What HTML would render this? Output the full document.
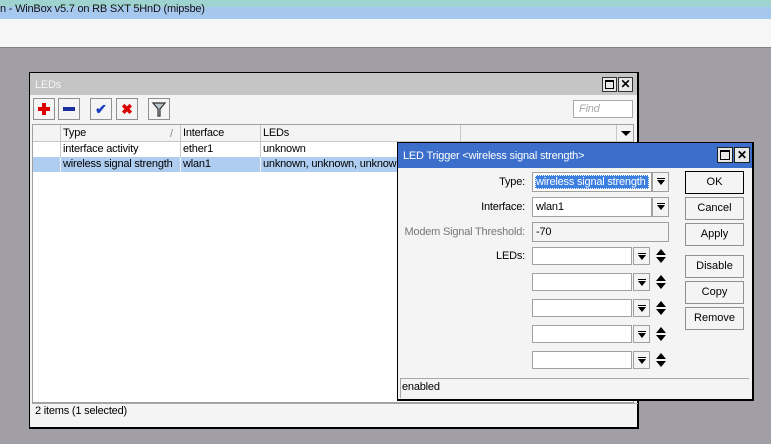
<!DOCTYPE html>
<html><head><meta charset="utf-8"><style>
*{margin:0;padding:0;box-sizing:border-box}
body{width:771px;height:444px;overflow:hidden;background:#a19fa5;font:11px "Liberation Sans",sans-serif;color:#000;position:relative}
.a{position:absolute}
.t{position:absolute;white-space:nowrap;line-height:13px;font-size:11px!important;letter-spacing:-0.2px}
.fld{position:absolute;background:#fff;border:1px solid #a0a0a0}
.dd{position:absolute;background:#f4f4f4;border:1px solid #a0a0a0;width:17px;height:20px}
.dd:after{content:"";position:absolute;left:4px;top:5px;width:8px;height:1px;background:#000}
.dd i{position:absolute;left:4px;top:7px;border-left:4px solid transparent;border-right:4px solid transparent;border-top:5px solid #000;width:0;height:0}
.btn{position:absolute;background:#f4f4f4;border:1px solid #909090;text-align:center;line-height:21px;font-size:11px}
.ud{position:absolute;width:10px;height:14px}
.ud:before{content:"";position:absolute;left:0;top:0;border-left:5px solid transparent;border-right:5px solid transparent;border-bottom:6px solid #000}
.ud:after{content:"";position:absolute;left:0;top:8px;border-left:5px solid transparent;border-right:5px solid transparent;border-top:6px solid #000}
.tb{position:absolute;top:98px;width:22px;height:22px;background:#f4f4f4;border:1px solid #909090}
</style></head><body>
<div class="a" style="left:0;top:0;width:771px;height:7px;background:#9ed3cf"></div>
<div class="a" style="left:0;top:7px;width:771px;height:12px;background:#a6c8ee"></div>
<div class="t" style="left:0;top:3px;color:#111">n - WinBox v5.7 on RB SXT 5HnD (mipsbe)</div>
<div class="a" style="left:0;top:19px;width:771px;height:29px;background:#f6f6f6;border-bottom:1px solid #808080"></div>

<div class="a" style="left:29px;top:72px;width:610px;height:357px;background:#f4f4f4;border:1px solid #000;border-right-width:2px;border-bottom-width:2px"></div>
<div class="a" style="left:30px;top:73px;width:607px;height:22px;background:#c5c5c5"></div>
<div class="t" style="left:35px;top:79px;color:#f4f4f4">LEDs</div>
<div class="a" style="left:602px;top:77px;width:15px;height:15px;border:1px solid #333;background:#e8e8e8"><div class="a" style="left:2px;top:2px;width:9px;height:9px;border:1px solid #000;border-top-width:2px"></div></div>
<div class="a" style="left:618px;top:77px;width:15px;height:15px;border:1px solid #333;background:#e8e8e8;font-weight:bold;font-size:12px;line-height:13px;text-align:center">✕</div>

<div class="tb" style="left:33px"><div class="a" style="left:4px;top:8px;width:12px;height:4px;background:#d00"></div><div class="a" style="left:8px;top:4px;width:4px;height:12px;background:#d00"></div></div>
<div class="tb" style="left:58px"><div class="a" style="left:4px;top:8px;width:12px;height:4px;background:#1a2fa0"></div></div>
<div class="tb" style="left:90px;color:#1a3ec0;font-size:14px;text-align:center;line-height:20px;font-weight:bold">✔</div>
<div class="tb" style="left:116px;color:#d00;font-size:14px;text-align:center;line-height:20px;font-weight:bold">✖</div>
<div class="tb" style="left:148px"><svg width="20" height="20" style="position:absolute;left:0;top:0"><path d="M4 4 H16 L11 10 V17 H9 V10 Z" fill="#b8c4cc" stroke="#333" stroke-width="1.2"/></svg></div>
<div class="a" style="left:573px;top:100px;width:60px;height:18px;background:#fff;border:1px solid #a8a8a8"></div>
<div class="t" style="left:579px;top:103px;color:#a8a8a8;font-style:italic">Find</div>

<div class="a" style="left:32px;top:124px;width:602px;height:279px;background:#fff;border:1px solid #a0a0a0"></div>
<div class="a" style="left:33px;top:125px;width:600px;height:17px;background:#f4f4f4;border-bottom:1px solid #c8c8c8"></div>
<div class="a" style="left:60px;top:125px;width:1px;height:47px;background:#c8c8c8"></div>
<div class="a" style="left:180px;top:125px;width:1px;height:47px;background:#c8c8c8"></div>
<div class="a" style="left:260px;top:125px;width:1px;height:47px;background:#c8c8c8"></div>
<div class="a" style="left:460px;top:125px;width:1px;height:17px;background:#c8c8c8"></div>
<div class="a" style="left:616px;top:125px;width:1px;height:17px;background:#c8c8c8"></div>
<div class="a" style="left:621px;top:131px;border-left:5px solid transparent;border-right:5px solid transparent;border-top:5px solid #000"></div>
<div class="t" style="left:63px;top:127px">Type</div>
<div class="t" style="left:170px;top:128px;color:#888;font-size:9px">/</div>
<div class="t" style="left:183px;top:127px">Interface</div>
<div class="t" style="left:263px;top:127px">LEDs</div>
<div class="a" style="left:33px;top:157px;width:600px;height:1px;background:#e4e4e4"></div>
<div class="t" style="left:63px;top:143px">interface activity</div>
<div class="t" style="left:183px;top:143px">ether1</div>
<div class="t" style="left:263px;top:143px">unknown</div>
<div class="a" style="left:33px;top:157px;width:600px;height:15px;background:#afcdf0"></div>
<div class="a" style="left:60px;top:157px;width:1px;height:15px;background:#f0f0f0"></div>
<div class="a" style="left:180px;top:157px;width:1px;height:15px;background:#f0f0f0"></div>
<div class="a" style="left:260px;top:157px;width:1px;height:15px;background:#f0f0f0"></div>
<div class="t" style="left:63px;top:158px">wireless signal strength</div>
<div class="t" style="left:183px;top:158px">wlan1</div>
<div class="t" style="left:263px;top:158px">unknown, unknown, unknown</div>
<div class="a" style="left:32px;top:403px;width:606px;height:1px;background:#a8a8a8"></div>
<div class="t" style="left:35px;top:405px">2 items (1 selected)</div>

<div class="a" style="left:397px;top:142px;width:357px;height:259px;background:#f4f4f4;border:1px solid #000;border-right-width:2px;border-bottom-width:2px"></div>
<div class="a" style="left:398px;top:143px;width:354px;height:25px;background:#3b6fcb"></div>
<div class="t" style="left:403px;top:150px;color:#fff">LED Trigger &lt;wireless signal strength&gt;</div>
<div class="a" style="left:717px;top:147px;width:16px;height:16px;border:1px solid #222;background:#e8e8e8"><div class="a" style="left:2px;top:2px;width:10px;height:10px;border:1px solid #000;border-top-width:2px"></div></div>
<div class="a" style="left:734px;top:147px;width:16px;height:16px;border:1px solid #222;background:#e8e8e8;font-weight:bold;font-size:12px;line-height:14px;text-align:center">✕</div>

<div class="t" style="left:420px;width:105px;text-align:right;top:176px">Type:</div>
<div class="t" style="left:420px;width:105px;text-align:right;top:201px">Interface:</div>
<div class="t" style="left:395px;width:130px;text-align:right;top:226px;color:#777">Modem Signal Threshold:</div>
<div class="t" style="left:420px;width:105px;text-align:right;top:250px">LEDs:</div>

<div class="fld" style="left:532px;top:172px;width:120px;height:20px"><div class="a" style="left:2px;top:2px;width:114px;height:14px;background:#3b7fe0;border:1px dotted #fff"></div><div class="t" style="left:3px;top:3px;color:#fff">wireless signal strength</div></div>
<div class="dd" style="left:652px;top:172px"><i></i></div>
<div class="fld" style="left:532px;top:197px;width:120px;height:20px"><div class="t" style="left:3px;top:3px">wlan1</div></div>
<div class="dd" style="left:652px;top:197px"><i></i></div>
<div class="fld" style="left:532px;top:222px;width:137px;height:20px;background:#f4f4f4"><div class="t" style="left:3px;top:3px">-70</div></div>

<div class="fld" style="left:532px;top:247px;width:100px;height:18px"></div><div class="dd" style="left:633px;top:247px;height:18px"><i></i></div><div class="ud" style="left:656px;top:249px"></div>
<div class="fld" style="left:532px;top:273px;width:100px;height:18px"></div><div class="dd" style="left:633px;top:273px;height:18px"><i></i></div><div class="ud" style="left:656px;top:275px"></div>
<div class="fld" style="left:532px;top:299px;width:100px;height:18px"></div><div class="dd" style="left:633px;top:299px;height:18px"><i></i></div><div class="ud" style="left:656px;top:301px"></div>
<div class="fld" style="left:532px;top:325px;width:100px;height:18px"></div><div class="dd" style="left:633px;top:325px;height:18px"><i></i></div><div class="ud" style="left:656px;top:327px"></div>
<div class="fld" style="left:532px;top:351px;width:100px;height:18px"></div><div class="dd" style="left:633px;top:351px;height:18px"><i></i></div><div class="ud" style="left:656px;top:353px"></div>

<div class="btn" style="left:685px;top:171px;width:59px;height:23px;border-color:#000">OK</div>
<div class="btn" style="left:685px;top:197px;width:59px;height:23px">Cancel</div>
<div class="btn" style="left:685px;top:223px;width:59px;height:23px">Apply</div>
<div class="btn" style="left:685px;top:255px;width:59px;height:23px">Disable</div>
<div class="btn" style="left:685px;top:281px;width:59px;height:23px">Copy</div>
<div class="btn" style="left:685px;top:307px;width:59px;height:23px">Remove</div>

<div class="a" style="left:400px;top:378px;width:349px;height:1px;background:#a8a8a8"></div>
<div class="a" style="left:400px;top:378px;width:1px;height:20px;background:#a8a8a8"></div>
<div class="t" style="left:402px;top:381px">enabled</div>
</body></html>
